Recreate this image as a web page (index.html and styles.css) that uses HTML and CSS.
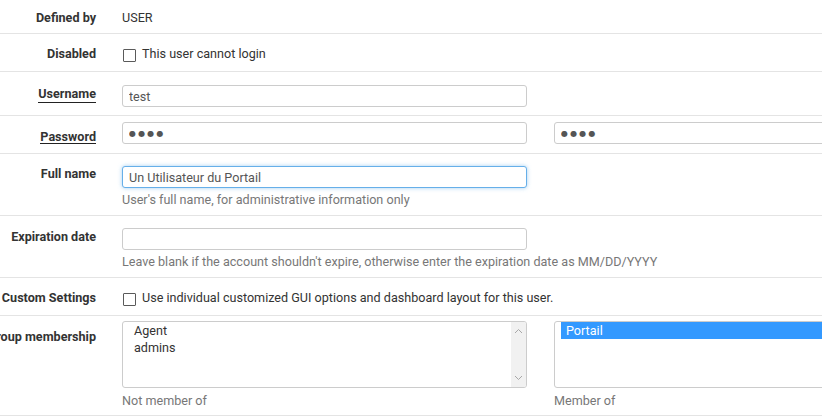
FILE: index.html
```html
<!DOCTYPE html>
<html lang="en">
<head>
<meta charset="utf-8">
<title>User</title>
<link rel="stylesheet" href="styles.css">
</head>
<body>
<div class="form">
  <div class="row r-defined">
    <div class="lbl">Defined by</div>
    <div class="ctl"><div class="static">USER</div></div>
  </div>
  <div class="row r-disabled">
    <div class="lbl">Disabled</div>
    <div class="ctl"><label class="check"><span class="box"></span><span>This user cannot login</span></label></div>
  </div>
  <div class="row r-user">
    <div class="lbl lbl-user"><span class="req">Username</span></div>
    <div class="ctl"><input class="inp" type="text" value="test"></div>
  </div>
  <div class="row r-pass">
    <div class="lbl lbl-pass"><span class="req">Password</span></div>
    <div class="ctl ctl-two">
      <input class="inp inp-pw" type="text" value="●●●●" readonly>
      <input class="inp inp-pw" type="text" value="●●●●" readonly>
    </div>
  </div>
  <div class="row r-full">
    <div class="lbl">Full name</div>
    <div class="ctl">
      <input class="inp inp-focus" type="text" value="Un Utilisateur du Portail">
      <div class="help">User's full name, for administrative information only</div>
    </div>
  </div>
  <div class="row r-exp">
    <div class="lbl lbl-exp">Expiration date</div>
    <div class="ctl">
      <input class="inp" type="text" value="">
      <div class="help">Leave blank if the account shouldn't expire, otherwise enter the expiration date as MM/DD/YYYY</div>
    </div>
  </div>
  <div class="row r-custom">
    <div class="lbl">Custom Settings</div>
    <div class="ctl"><label class="check"><span class="box"></span><span>Use individual customized GUI options and dashboard layout for this user.</span></label></div>
  </div>
  <div class="row r-group">
    <div class="lbl lbl-group">Group membership</div>
    <div class="ctl ctl-two">
      <div class="col">
        <div class="sel">
          <div class="opts">
            <div class="opt">Agent</div>
            <div class="opt">admins</div>
          </div>
          <div class="sbar">
            <svg width="15" height="10" viewBox="0 0 15 10"><path d="M4 7 L7.5 3.5 L11 7" fill="none" stroke="#a8a8a8" stroke-width="1"/></svg>
            <svg width="15" height="10" viewBox="0 0 15 10"><path d="M4 3 L7.5 6.5 L11 3" fill="none" stroke="#a8a8a8" stroke-width="1"/></svg>
          </div>
        </div>
        <div class="help help-sel">Not member of</div>
      </div>
      <div class="col">
        <div class="sel">
          <div class="opts">
            <div class="opt opt-on">Portail</div>
          </div>
        </div>
        <div class="help help-sel">Member of</div>
      </div>
    </div>
  </div>
</div>
</body>
</html>
```

FILE: styles.css
```css
html, body {
  margin: 0;
  padding: 0;
  overflow: hidden;
  background: #fff;
}
body {
  font-family: Roboto, "Liberation Sans", sans-serif;
  font-size: 12.6px;
  color: #333;
}
.form {
  width: 822px;
}
.row {
  display: flex;
  align-items: flex-start;
  border-bottom: 1px solid #e4e4e4;
  box-sizing: border-box;
}
.lbl {
  width: 96px;
  flex: none;
  display: flex;
  justify-content: flex-end;
  white-space: nowrap;
  font-weight: 700;
  line-height: 16px;
  color: #333;
}
.ctl {
  flex: none;
  width: 405px;
  margin-left: 26px;
  line-height: 16px;
}
.ctl-two {
  display: flex;
  gap: 27px;
}
.ctl-two > * {
  flex: none;
  width: 405px;
}
.req {
  border-bottom: 1px solid #222;
}
.static {
  color: #333;
}
.check {
  display: flex;
  align-items: flex-start;
  white-space: nowrap;
  color: #333;
}
.box {
  flex: none;
  width: 13px;
  height: 13px;
  box-sizing: border-box;
  border: 1px solid #5a5a5a;
  border-radius: 1px;
  margin: 3px 6px 0 1px;
  background: #fff;
}
.inp {
  display: block;
  width: 405px;
  height: 22px;
  box-sizing: border-box;
  margin: 0;
  padding: 0 6px;
  border: 1px solid #cccccc;
  border-radius: 3px;
  background: #fff;
  font-family: Roboto, "Liberation Sans", sans-serif;
  font-size: 12.6px;
  color: #555;
  outline: none;
}
.inp-pw {
  font-family: "DejaVu Sans", sans-serif;
  font-size: 8px;
  letter-spacing: 2.2px;
  color: #555;
}
.inp-focus {
  border-color: #66afe9;
  box-shadow: 0 0 4px rgba(102, 175, 233, 0.6);
}
.help {
  color: #777;
  margin-top: 4px;
  white-space: nowrap;
  line-height: 16px;
}
.help-sel {
  margin-top: 5px;
}

/* row spacing */
.r-defined { padding: 10px 0 7px; }
.r-disabled { padding: 12px 0 9px; }
.r-user { padding: 13px 0 8px; }
.lbl-user { padding-top: 1px; }
.r-pass { padding: 6px 0 9px; }
.lbl-pass { padding-top: 7px; height: 15px; }
.r-full { padding: 12px 0 7px; }
.r-exp { padding: 12px 0 7px; }
.lbl-exp { padding-top: 1px; }
.r-custom { padding: 12px 0 9px; }
.r-group { padding: 5px 0 6px; }
.lbl-group { padding-top: 8px; }

/* select lists */
.sel {
  display: flex;
  height: 67px;
  box-sizing: border-box;
  border: 1px solid #cccccc;
  border-radius: 3px;
  background: #fff;
  overflow: hidden;
}
.opts {
  flex: 1;
  min-width: 0;
}
.opt {
  height: 17px;
  line-height: 17px;
  margin-left: 6px;
  padding-left: 5px;
  color: #333;
}
.opt-on {
  background: #3399ff;
  color: #fff;
}
.sbar {
  flex: none;
  width: 15px;
  background: #f1f1f1;
  display: flex;
  flex-direction: column;
  justify-content: space-between;
  padding: 4px 0;
}
.sbar svg {
  display: block;
}
```
